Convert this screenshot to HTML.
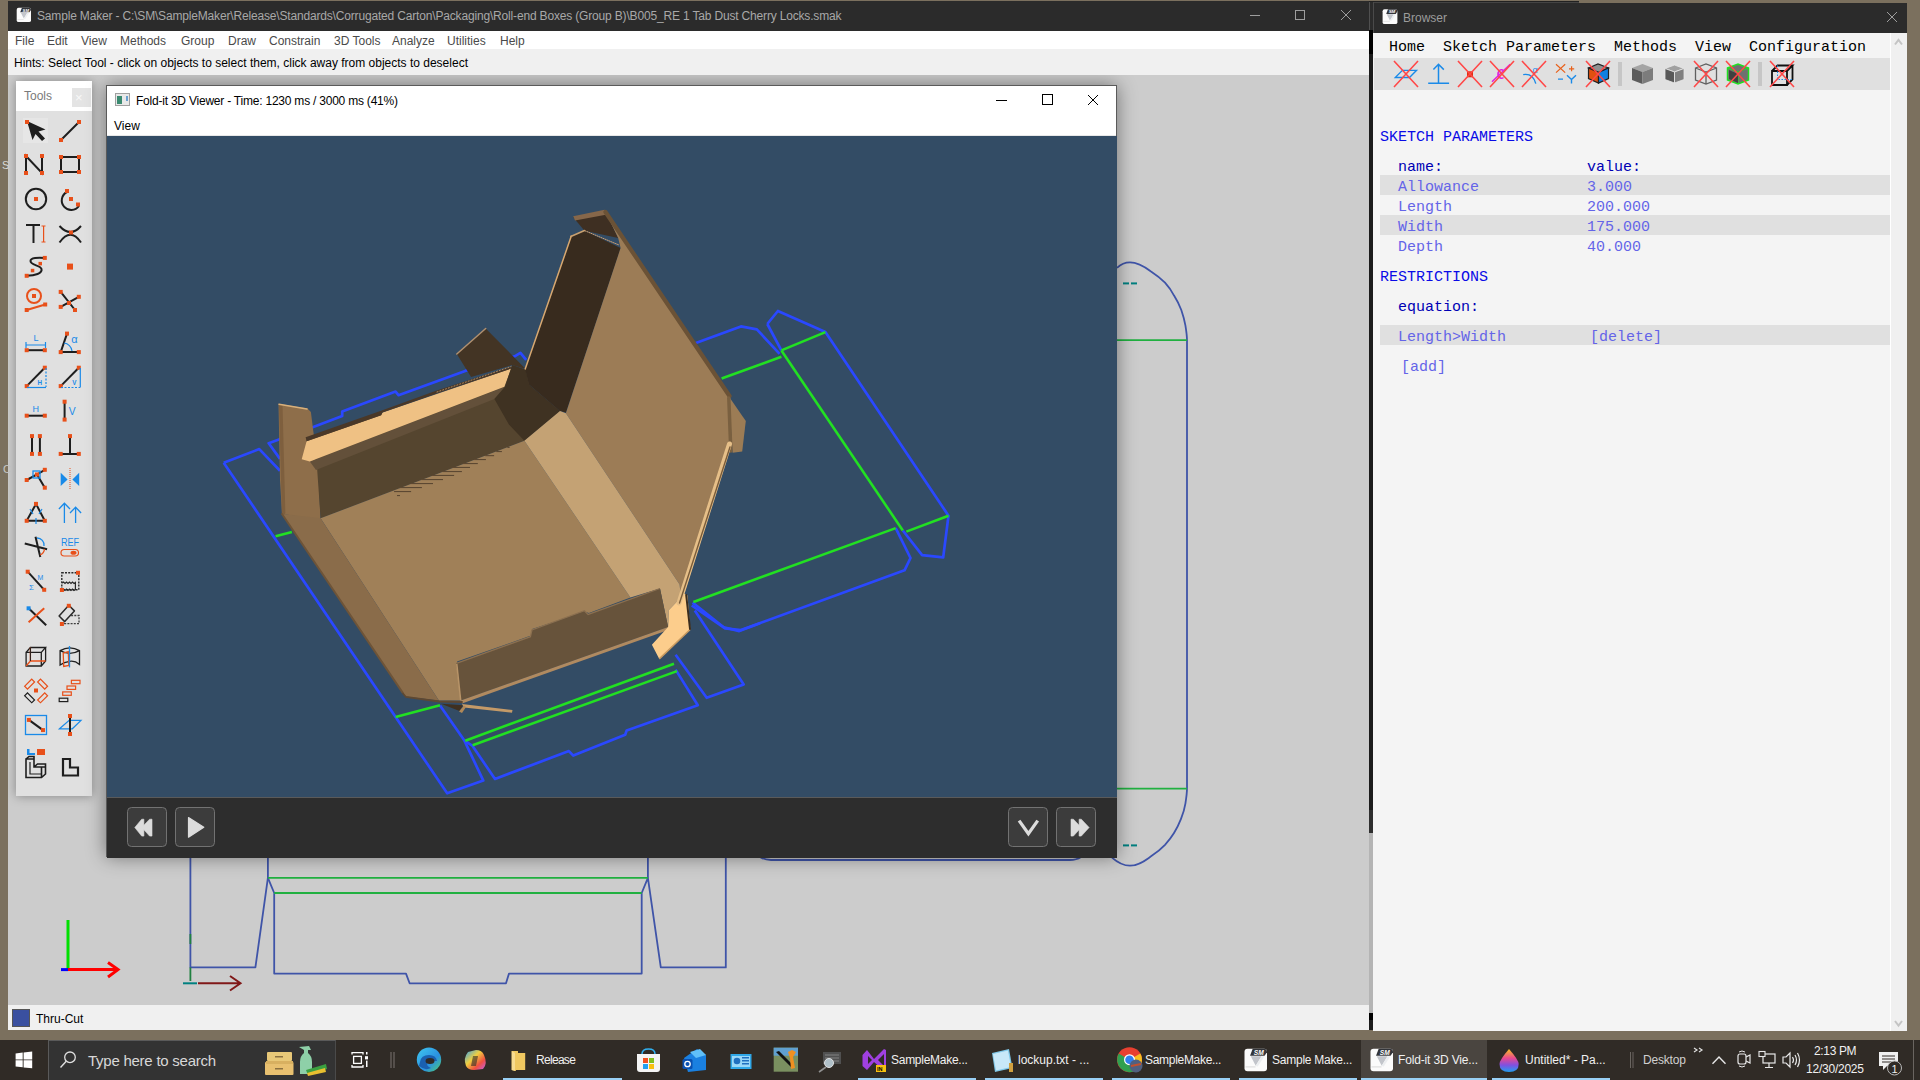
<!DOCTYPE html>
<html><head><meta charset="utf-8">
<style>
*{box-sizing:border-box;margin:0;padding:0}
html,body{width:1920px;height:1080px;overflow:hidden}
body{position:relative;background:#7b705e;font-family:"Liberation Sans",sans-serif;font-size:12px;color:#000}
.a{position:absolute}
.t{position:absolute;white-space:pre;line-height:1}
.mono{font-family:"Liberation Mono",monospace}
svg{position:absolute;left:0;top:0;overflow:visible}
</style></head><body>

<!-- ============ MAIN WINDOW ============ -->
<div class="a" id="main" style="left:8px;top:1px;width:1361px;height:1029px;background:#cccccc;overflow:hidden">
  <!-- title bar -->
  <div class="a" style="left:0;top:0;width:1361px;height:30px;background:#2b2b2b"></div>
  <!-- menu -->
  <div class="a" style="left:0;top:30px;width:1361px;height:18px;background:#fff"></div>
  <!-- hints -->
  <div class="a" style="left:0;top:48px;width:1361px;height:26px;background:#f0f0f0"></div>
  <!-- status -->
  <div class="a" style="left:0;top:1004px;width:1361px;height:25px;background:#f0f0f0"></div>
  <div class="a" style="left:4px;top:1008px;width:18px;height:18px;background:#3a50a0;border:1px solid #555"></div>
</div>
<!-- title text -->
<div class="t" style="left:37px;top:10px;color:#a8a8a8;font-size:12px;letter-spacing:-0.17px">Sample Maker - C:\SM\SampleMaker\Release\Standards\Corrugated Carton\Packaging\Roll-end Boxes (Group B)\B005_RE 1 Tab Dust Cherry Locks.smak</div>
<!-- menu text -->
<div class="t" style="left:15px;top:35px;color:#4a4a4a">File</div>
<div class="t" style="left:47px;top:35px;color:#4a4a4a">Edit</div>
<div class="t" style="left:81px;top:35px;color:#4a4a4a">View</div>
<div class="t" style="left:120px;top:35px;color:#4a4a4a">Methods</div>
<div class="t" style="left:181px;top:35px;color:#4a4a4a">Group</div>
<div class="t" style="left:228px;top:35px;color:#4a4a4a">Draw</div>
<div class="t" style="left:269px;top:35px;color:#4a4a4a">Constrain</div>
<div class="t" style="left:334px;top:35px;color:#4a4a4a">3D Tools</div>
<div class="t" style="left:392px;top:35px;color:#4a4a4a">Analyze</div>
<div class="t" style="left:447px;top:35px;color:#4a4a4a">Utilities</div>
<div class="t" style="left:500px;top:35px;color:#4a4a4a">Help</div>
<div class="t" style="left:14px;top:57px;color:#000">Hints: Select Tool - click on objects to select them, click away from objects to deselect</div>
<div class="t" style="left:36px;top:1013px;color:#000">Thru-Cut</div>

<svg width="1920" height="40" style="z-index:3"><g transform="translate(16.7 7.8) scale(0.6355555555555555)"><rect x="0" y="0" width="22.5" height="22.5" rx="3" fill="#fbfbfb"/><path d="M5.5 7 L8.2 0 L19 0 Q22.5 0 22.5 3 L22.5 3.5 L20 7 Z" fill="#33353a"/><text x="9.3" y="6.2" font-family="Liberation Sans" font-size="6.6" font-weight="bold" font-style="italic" fill="#fff">SM</text><path d="M6.3 7.4 L17 7.4 L11.2 17 Z" fill="#c2c5cb"/><path d="M17 7.4 L20 7.4 L13 18 L11.2 17 Z" fill="#eceef0"/><rect x="1" y="17.6" width="10" height="1" fill="#dadada"/></g><g transform="translate(1382.6 9.3) scale(0.6577777777777778)"><rect x="0" y="0" width="22.5" height="22.5" rx="3" fill="#fbfbfb"/><path d="M5.5 7 L8.2 0 L19 0 Q22.5 0 22.5 3 L22.5 3.5 L20 7 Z" fill="#33353a"/><text x="9.3" y="6.2" font-family="Liberation Sans" font-size="6.6" font-weight="bold" font-style="italic" fill="#fff">SM</text><path d="M6.3 7.4 L17 7.4 L11.2 17 Z" fill="#c2c5cb"/><path d="M17 7.4 L20 7.4 L13 18 L11.2 17 Z" fill="#eceef0"/><rect x="1" y="17.6" width="10" height="1" fill="#dadada"/></g></svg>
<!-- title buttons main -->
<svg width="1920" height="40" style="z-index:2">
  <g stroke="#9d9d9d" stroke-width="1" fill="none">
    <line x1="1250" y1="15.5" x2="1260" y2="15.5"/>
    <rect x="1295.5" y="10.5" width="9" height="9"/>
    <line x1="1341" y1="10" x2="1351" y2="20"/><line x1="1351" y1="10" x2="1341" y2="20"/>
  </g>
</svg>

<!-- strip between windows -->
<div class="a" style="left:1369px;top:1px;width:4px;height:30px;background:#2b2b2b;border-left:1px solid #505050"></div>
<div class="t" style="left:2px;top:160px;color:#d8d8d8;font-size:11px">S</div>
<div class="t" style="left:3px;top:464px;color:#c8c8c8;font-size:11px">C</div>
<div class="a" style="left:1369px;top:30px;width:4px;height:1000px;background:#1c1c1c"></div>
<div class="a" style="left:1369px;top:30px;width:4px;height:24px;background:#000"></div>
<div class="a" style="left:1369px;top:810px;width:4px;height:23px;background:#2e2e2e"></div>
<div class="a" style="left:1369px;top:833px;width:4px;height:180px;background:#b4b4b4"></div>
<div class="a" style="left:1369px;top:1013px;width:4px;height:7px;background:#000"></div>

<!-- ============ BROWSER ============ -->
<div class="a" style="left:1369px;top:1px;width:210px;height:1px;background:#222"></div><div class="a" style="left:1373px;top:2px;width:206px;height:1px;background:#444"></div><div class="a" style="left:1373px;top:2px;width:1px;height:31px;background:#4a4a4a;z-index:2"></div>
<div class="a" style="left:1373px;top:3px;width:534px;height:1028px;background:#f4f4f4">
  <div class="a" style="left:0;top:0;width:534px;height:30px;background:#2b2b2b"></div>
  <div class="a" style="left:1px;top:55px;width:516px;height:32px;background:#e0e0e0"></div>
  <div class="a" style="left:517px;top:30px;width:17px;height:998px;background:#f0f0f0;border-left:1px solid #fff"></div>
</div>
<div class="t" style="left:1403px;top:12px;color:#9c9c9c">Browser</div>
<svg width="1920" height="40"><g stroke="#9d9d9d" stroke-width="1" fill="none"><line x1="1887" y1="12" x2="1897" y2="22"/><line x1="1897" y1="12" x2="1887" y2="22"/></g></svg>

<div class="t mono" style="left:1389px;top:40px;font-size:15px;color:#000">Home  Sketch Parameters  Methods  View  Configuration</div>
<svg width="1920" height="1080" id="bicons" style="z-index:3"><path d="M1395.3 77.5 L1402.4 70.3 L1416.6 70.3 L1409.5 77.5 Z" stroke="#1a8ae8" stroke-width="1.3" fill="none" />
<path d="M1394 61 L1418 87 M1418 61 L1394 87" stroke="#ff4848" stroke-width="1.6" fill="none"/>
<path d="M1428.2 83.2 L1449.1 83.2 M1438.5 83 L1438.5 64.5 M1433.4 69.6 L1438.5 64.3 L1443.8 69.6" stroke="#1a8ae8" stroke-width="1.5" fill="none" />
<rect x="1467" y="71.3" width="6" height="6" fill="#e03010"/>
<path d="M1458 61 L1482 87 M1482 61 L1458 87" stroke="#ff4848" stroke-width="1.6" fill="none"/>
<path d="M1492 81.7 L1510.2 64.2" stroke="#e020e0" stroke-width="1.5" fill="none" />
<path d="M1503.5 70.5 A3.5 4.2 0 1 0 1503.5 77.5" stroke="#e020e0" stroke-width="1.5" fill="none" />
<path d="M1490 61 L1514 87 M1514 61 L1490 87" stroke="#ff4848" stroke-width="1.6" fill="none"/>
<path d="M1523.2 74.6 Q1533 73 1535.8 83.6" stroke="#1a8ae8" stroke-width="1.4" fill="none" />
<text x="1532.5" y="73" font-family="Liberation Sans" font-size="9" fill="#1a8ae8">α</text>
<path d="M1522 61 L1546 87 M1546 61 L1522 87" stroke="#ff4848" stroke-width="1.6" fill="none"/>
<path d="M1556 64.2 L1565.2 72.6 M1565.2 64.2 L1556 72.6 M1569 68.8 L1574.2 68.8 M1571.6 66.3 L1571.6 71.2" stroke="#e8601a" stroke-width="1.2" fill="none" />
<path d="M1558 79.1 L1563 79.1 M1567 75.2 L1571.5 79.5 L1576 75.2 M1571.5 79.5 L1571.5 83.6" stroke="#1a8ae8" stroke-width="1.4" fill="none" />
<path d="M1588.5 68 L1598 64 L1608.5 68 L1598.5 72.5 Z" stroke="#202020" stroke-width="1.2" fill="#909090" />
<path d="M1588.5 68 L1598.5 72.5 L1598.5 83 L1588.5 78.5 Z" stroke="#202020" stroke-width="1.2" fill="#e05010" />
<path d="M1598.5 72.5 L1608.5 68 L1608.5 78.5 L1598.5 83 Z" stroke="#202020" stroke-width="1.2" fill="#1080e0" />
<path d="M1586 61 L1610 87 M1610 61 L1586 87" stroke="#ff4848" stroke-width="1.6" fill="none"/>
<rect x="1618" y="62" width="4" height="24" fill="#c6c6c6"/><rect x="1758" y="62" width="4" height="24" fill="#c6c6c6"/>
<path d="M1632 68 L1642.5 64 L1653 68 L1642.5 72 Z" stroke="none" stroke-width="0" fill="#a4a4a4" />
<path d="M1632 68 L1642.5 72 L1642.5 84 L1632 80 Z" stroke="none" stroke-width="0" fill="#5c5c5c" />
<path d="M1642.5 72 L1653 68 L1653 80 L1642.5 84 Z" stroke="none" stroke-width="0" fill="#7c7c7c" />
<path d="M1665 68.5 L1674.5 65 L1684 68.5 L1674.5 72 Z" stroke="#e8e8e8" stroke-width="0.8" fill="#a0a0a0" />
<path d="M1665 68.5 L1674.5 72 L1674.5 83 L1665 79.5 Z" stroke="#e8e8e8" stroke-width="0.8" fill="#585858" />
<path d="M1674.5 72 L1684 68.5 L1684 79.5 L1674.5 83 Z" stroke="#e8e8e8" stroke-width="0.8" fill="#808080" />
<path d="M1695.5 68 L1706 64 L1716.5 68 L1716.5 80 L1706 84 L1695.5 80 Z M1695.5 68 L1706 72 L1716.5 68 M1706 72 L1706 84" stroke="#606060" stroke-width="1.3" fill="none" />
<path d="M1694 61 L1718 87 M1718 61 L1694 87" stroke="#ff4848" stroke-width="1.6" fill="none"/>
<path d="M1727.5 68 L1738 64 L1748.5 68 L1748.5 80 L1738 84 L1727.5 80 Z" stroke="#20e020" stroke-width="1.5" fill="#707070" />
<path d="M1727.5 68 L1738 72 L1748.5 68 M1738 72 L1738 84" stroke="#20e020" stroke-width="1" fill="none" />
<path d="M1729 70 L1738 74 L1738 83 L1729 79 Z" stroke="none" stroke-width="0" fill="#404040" />
<path d="M1726 61 L1750 87 M1750 61 L1726 87" stroke="#ff4848" stroke-width="1.6" fill="none"/>
<path d="M1772 71 L1787 71 L1787 85 L1772 85 Z M1772 71 L1777.5 65.5 L1792.5 65.5 L1787 71 M1792.5 65.5 L1792.5 79.5 L1787 85" stroke="#101010" stroke-width="1.8" fill="none" />
<path d="M1777.5 65.5 L1777.5 79.5 L1792.5 79.5 M1777.5 79.5 L1772 85" stroke="#1a8ae8" stroke-width="1" fill="none" stroke-dasharray="1.5 1.5"/>
<path d="M1770 61 L1794 87 M1794 61 L1770 87" stroke="#ff4848" stroke-width="1.6" fill="none"/></svg>
<div class="a" style="left:1380px;top:175px;width:510px;height:20px;background:#e0e0e0"></div>
<div class="a" style="left:1380px;top:215px;width:510px;height:20px;background:#e0e0e0"></div>
<div class="a" style="left:1380px;top:325px;width:510px;height:20px;background:#e0e0e0"></div>
<div class="t mono" style="left:1380px;top:130px;font-size:15px;color:#0a0ae6">SKETCH PARAMETERS</div>
<div class="t mono" style="left:1398px;top:160px;font-size:15px;color:#0000b4">name:</div>
<div class="t mono" style="left:1587px;top:160px;font-size:15px;color:#0000b4">value:</div>
<div class="t mono" style="left:1398px;top:180px;font-size:15px;color:#6464e8">Allowance</div>
<div class="t mono" style="left:1587px;top:180px;font-size:15px;color:#6464e8">3.000</div>
<div class="t mono" style="left:1398px;top:200px;font-size:15px;color:#6464e8">Length</div>
<div class="t mono" style="left:1587px;top:200px;font-size:15px;color:#6464e8">200.000</div>
<div class="t mono" style="left:1398px;top:220px;font-size:15px;color:#6464e8">Width</div>
<div class="t mono" style="left:1587px;top:220px;font-size:15px;color:#6464e8">175.000</div>
<div class="t mono" style="left:1398px;top:240px;font-size:15px;color:#6464e8">Depth</div>
<div class="t mono" style="left:1587px;top:240px;font-size:15px;color:#6464e8">40.000</div>
<div class="t mono" style="left:1380px;top:270px;font-size:15px;color:#0a0ae6">RESTRICTIONS</div>
<div class="t mono" style="left:1398px;top:300px;font-size:15px;color:#0000b4">equation:</div>
<div class="t mono" style="left:1398px;top:330px;font-size:15px;color:#6464e8">Length&gt;Width</div>
<div class="t mono" style="left:1590px;top:330px;font-size:15px;color:#6464e8">[delete]</div>
<div class="t mono" style="left:1401px;top:360px;font-size:15px;color:#6464e8">[add]</div>
<svg width="1920" height="1080" style="z-index:3"><path d="M1895 44.5 L1898.5 40 L1902 44.5 M1895 1021 L1898.5 1025.5 L1902 1021" stroke="#c4c4c4" stroke-width="2" fill="none"/></svg>


<!-- ============ CANVAS DRAWING (behind viewer) ============ -->
<svg width="1920" height="1080" style="z-index:0">
 <g fill="none" stroke="#3f54a8" stroke-width="1.8" stroke-linejoin="round">
  <path d="M1117 267.8 C1121 264 1126 262.4 1130 262.4 C1138 262.4 1145 267 1151 271.4 C1158 276 1162 279.5 1165 282.6 C1169 287 1172 291.5 1174.2 295.8 C1177.5 301 1179.5 305.5 1181.3 310 C1183 315 1184.5 320 1185.4 325.4 C1186.3 331 1187 336 1187 340 L1187 788.6 C1187 793 1186.3 798 1185.4 803.6 C1184.5 809 1183 814 1181 818.9 C1179 824 1176.5 829 1174 833 C1171 838 1168 841.5 1165 844.8 C1161 849 1156 853 1150.7 856.6 C1145 860.5 1139 865.7 1130 865.7 C1124 865.7 1117 862 1112 857.6"/>
  <path d="M760 857 C763.5 859.3 767 860 771 860 L1070 860 C1074 860 1077.5 859.3 1081 857"/>
  <path d="M190.4 857 L190.4 967.4 L255.4 967.4 L267.9 877.8 L267.9 857"/>
  <path d="M267.9 877.8 L274.2 893 L274.2 973.6 L406 973.6 L409.6 983.3 L506 983.3 L509 973.6 L641.7 973.6 L641.7 893 L647.9 877.8 L660.8 967.4 L725.8 967.4 L725.8 857"/>
  <path d="M647.9 857 L647.9 877.8"/>
 </g>
 <g fill="none" stroke="#20b040" stroke-width="1.8">
  <line x1="1117" y1="340.1" x2="1187" y2="340.1"/>
  <line x1="1117" y1="788.6" x2="1187" y2="788.6"/>
  <line x1="267.9" y1="877.8" x2="647.9" y2="877.8"/>
  <line x1="274.2" y1="893" x2="641.7" y2="893"/>
  <line x1="190.4" y1="934" x2="190.4" y2="944" stroke="#208040"/>
  <line x1="190.4" y1="967.4" x2="190.4" y2="981" stroke="#208040"/>
 </g>
 <g stroke="#008080" stroke-width="2"><line x1="1123" y1="283.4" x2="1129" y2="283.4"/><line x1="1131" y1="283.4" x2="1137" y2="283.4"/>
 <line x1="1123" y1="845.4" x2="1129" y2="845.4"/><line x1="1131" y1="845.4" x2="1137" y2="845.4"/>
 <line x1="183" y1="983.3" x2="197" y2="983.3"/></g>
 <g stroke="#801818" stroke-width="2" fill="none"><path d="M198 983.3 L240.5 983.3 M230 976 L240.5 983.3 L230 990.5"/></g>
 <g stroke-width="3" fill="none">
  <line x1="68" y1="920" x2="68" y2="969.6" stroke="#00e000"/>
  <path d="M68 969.6 L118 969.6 M108 962.6 L118 969.6 L108 977" stroke="#ff0000"/>
  <line x1="61" y1="969.6" x2="68" y2="969.6" stroke="#0000ff"/>
 </g>
</svg>

<!-- ============ TOOLS PANEL ============ -->
<div class="a" style="left:8px;top:75px;width:1361px;height:930px;overflow:hidden;z-index:1"><div class="a" style="left:8px;top:6px;width:76px;height:715px;box-shadow:0 0 10px rgba(0,0,0,0.35)"></div></div>
<div class="a" style="left:16px;top:81px;width:76px;height:715px;background:#e0e0e0;z-index:2">
  <div class="a" style="left:0;top:0;width:76px;height:30px;background:#fff"></div>
  <div class="a" style="left:56px;top:7px;width:19px;height:19px;background:#e4e4e4"></div>
  <div class="t" style="left:59px;top:10px;color:#f8f8f8;font-size:13px">×</div>
</div>
<div class="t" style="left:24px;top:90px;color:#7a7a7a;z-index:3">Tools</div>
<svg width="1920" height="1080" id="tools" style="z-index:3"><rect x="23" y="118" width="25" height="25" fill="#e6e6e6"/>
<path d="M27 121 L45.5 129.5 L38.5 131.5 L45 138.5 L42 141 L35.5 134 L32.5 140 Z" stroke="#1e1e1e" stroke-width="0" fill="#1e1e1e" />
<rect x="25.0" y="120.0" width="4" height="4" fill="#e8501a"/>
<line x1="61" y1="140" x2="79" y2="122" stroke="#1e1e1e" stroke-width="2" />
<rect x="77.0" y="120.0" width="4" height="4" fill="#e8501a"/>
<rect x="59.0" y="138.0" width="4" height="4" fill="#e8501a"/>
<path d="M26 173 L26 156 L42 173 L42 156" stroke="#1e1e1e" stroke-width="2" fill="none" />
<rect x="24.0" y="154.0" width="4" height="4" fill="#e8501a"/>
<rect x="40.0" y="154.0" width="4" height="4" fill="#e8501a"/>
<rect x="24.0" y="171.0" width="4" height="4" fill="#e8501a"/>
<rect x="40.0" y="171.0" width="4" height="4" fill="#e8501a"/>
<rect x="61" y="157" width="18" height="15" stroke="#1e1e1e" stroke-width="2" fill="none"/>
<rect x="59.0" y="155.0" width="4" height="4" fill="#e8501a"/>
<rect x="77.0" y="155.0" width="4" height="4" fill="#e8501a"/>
<rect x="59.0" y="170.0" width="4" height="4" fill="#e8501a"/>
<rect x="77.0" y="170.0" width="4" height="4" fill="#e8501a"/>
<circle cx="36" cy="199" r="10.2" stroke="#1e1e1e" stroke-width="2" fill="none"/>
<rect x="34.0" y="197.0" width="4" height="4" fill="#e8501a"/>
<path d="M67 192 A9.5 9.5 0 1 0 79 206" stroke="#1e1e1e" stroke-width="2" fill="none" />
<rect x="65.0" y="189.0" width="4" height="4" fill="#e8501a"/>
<rect x="69.0" y="197.0" width="4" height="4" fill="#e8501a"/>
<rect x="76.0" y="202.5" width="4" height="4" fill="#e8501a"/>
<path d="M26 225 L40 225 M33.5 225 L33.5 243" stroke="#1e1e1e" stroke-width="2" fill="none" />
<path d="M43.6 226.5 L43.6 241.5 M41.5 226 L45.5 226 M41.5 242 L45.5 242" stroke="#e8501a" stroke-width="1.2" fill="none" />
<path d="M59.5 226 Q70.5 238 81 226 M59.5 242.5 Q70.5 227 81 242.5" stroke="#1e1e1e" stroke-width="2" fill="none" />
<rect x="69.0" y="230.5" width="4" height="4" fill="#e8501a"/>
<path d="M26.7 275.8 C35 275.5 42.5 273.5 41.5 269 C40.5 265 30.5 265.5 30.5 261 C30.5 257.5 38 257.5 44.8 257.9" stroke="#1e1e1e" stroke-width="2" fill="none" />
<rect x="42.8" y="255.9" width="4" height="4" fill="#e8501a"/>
<rect x="38.5" y="261.9" width="3.5" height="3.5" fill="#e8501a"/>
<rect x="30.8" y="268.8" width="3.5" height="3.5" fill="#e8501a"/>
<rect x="24.7" y="273.8" width="4" height="4" fill="#e8501a"/>
<rect x="67.0" y="263.6" width="6" height="6" fill="#e8501a"/>
<circle cx="34" cy="296" r="7" stroke="#e8501a" stroke-width="2" fill="none"/>
<rect x="32.0" y="294.0" width="4" height="4" fill="#e8501a"/>
<line x1="26.7" y1="310" x2="45.2" y2="304.5" stroke="#e8501a" stroke-width="2" />
<rect x="24.7" y="308.0" width="4" height="4" fill="#e8501a"/>
<rect x="43.2" y="302.5" width="4" height="4" fill="#e8501a"/>
<path d="M60.7 291.9 L75 310 M78.8 296.8 L60.7 306.9" stroke="#1e1e1e" stroke-width="2" fill="none" />
<rect x="58.7" y="289.9" width="4" height="4" fill="#e8501a"/>
<rect x="76.8" y="294.8" width="4" height="4" fill="#e8501a"/>
<rect x="58.7" y="304.9" width="4" height="4" fill="#e8501a"/>
<rect x="73.0" y="308.0" width="4" height="4" fill="#e8501a"/>
<rect x="67.0" y="301.0" width="4" height="4" fill="#e8501a"/>
<line x1="26.7" y1="350.2" x2="44.8" y2="350.2" stroke="#1e1e1e" stroke-width="2" />
<rect x="24.7" y="348.2" width="4" height="4" fill="#e8501a"/>
<rect x="42.8" y="348.2" width="4" height="4" fill="#e8501a"/>
<path d="M26 345 L45.5 345 M26 342 L26 348 M45.5 342 L45.5 348" stroke="#1a8ae8" stroke-width="1.2" fill="none" />
<text x="33.6" y="340.8" fill="#1a8ae8" font-family="Liberation Sans" font-size="9" >L</text>
<path d="M60.7 352.1 L67 333.6 M60.7 352.1 L78.8 352.1" stroke="#1e1e1e" stroke-width="2" fill="none" />
<rect x="65.0" y="331.6" width="4" height="4" fill="#e8501a"/>
<rect x="58.7" y="350.1" width="4" height="4" fill="#e8501a"/>
<rect x="76.8" y="350.1" width="4" height="4" fill="#e8501a"/>
<path d="M64 343 A9 9 0 0 1 72 351" stroke="#1a8ae8" stroke-width="1.2" fill="none" />
<text x="71.3" y="343.2" fill="#1a8ae8" font-family="Liberation Sans" font-size="11" >α</text>
<line x1="26.7" y1="386.1" x2="44.8" y2="367.7" stroke="#1e1e1e" stroke-width="2" />
<rect x="24.7" y="384.1" width="4" height="4" fill="#e8501a"/>
<rect x="42.8" y="365.7" width="4" height="4" fill="#e8501a"/>
<path d="M27 387.5 L46 387.5" stroke="#1a8ae8" stroke-width="1.2" fill="none" />
<path d="M46 368 L46 387" stroke="#1a8ae8" stroke-width="1.2" fill="none" stroke-dasharray="2 1.5"/>
<text x="37.6" y="385.3" fill="#1a8ae8" font-family="Liberation Sans" font-size="6.3" font-weight="bold">H</text>
<line x1="60.7" y1="386.1" x2="78.8" y2="367.7" stroke="#1e1e1e" stroke-width="2" />
<rect x="58.7" y="384.1" width="4" height="4" fill="#e8501a"/>
<rect x="76.8" y="365.7" width="4" height="4" fill="#e8501a"/>
<path d="M80.3 368 L80.3 387.5" stroke="#1a8ae8" stroke-width="1.2" fill="none" />
<path d="M61 387.5 L80 387.5" stroke="#1a8ae8" stroke-width="1.2" fill="none" stroke-dasharray="2 1.5"/>
<text x="72.2" y="385.3" fill="#1a8ae8" font-family="Liberation Sans" font-size="6.3" font-weight="bold">V</text>
<line x1="26.7" y1="415.7" x2="44.8" y2="415.7" stroke="#1e1e1e" stroke-width="2" />
<rect x="24.7" y="413.7" width="4" height="4" fill="#e8501a"/>
<rect x="42.8" y="413.7" width="4" height="4" fill="#e8501a"/>
<text x="32.5" y="412.3" fill="#1a8ae8" font-family="Liberation Sans" font-size="9" >H</text>
<line x1="64.6" y1="401.7" x2="64.6" y2="419.6" stroke="#1e1e1e" stroke-width="2" />
<rect x="62.6" y="399.7" width="4" height="4" fill="#e8501a"/>
<rect x="62.6" y="417.6" width="4" height="4" fill="#e8501a"/>
<text x="68.8" y="415.3" fill="#1a8ae8" font-family="Liberation Sans" font-size="10.3" >V</text>
<line x1="32" y1="436.1" x2="32" y2="453.9" stroke="#1e1e1e" stroke-width="2" />
<line x1="39.9" y1="436.1" x2="39.9" y2="453.9" stroke="#1e1e1e" stroke-width="2" />
<rect x="30.0" y="434.1" width="4" height="4" fill="#e8501a"/>
<rect x="30.0" y="451.9" width="4" height="4" fill="#e8501a"/>
<rect x="37.9" y="434.1" width="4" height="4" fill="#e8501a"/>
<rect x="37.9" y="451.9" width="4" height="4" fill="#e8501a"/>
<path d="M70 436.1 L70 453.9 M60.7 453.9 L78.8 453.9" stroke="#1e1e1e" stroke-width="2" fill="none" />
<rect x="68.0" y="434.1" width="4" height="4" fill="#e8501a"/>
<rect x="58.7" y="451.9" width="4" height="4" fill="#e8501a"/>
<rect x="76.8" y="451.9" width="4" height="4" fill="#e8501a"/>
<path d="M26.7 480 L37 474.5 L44.8 469.8 M37 474.5 L44.8 487.7" stroke="#1e1e1e" stroke-width="2" fill="none" />
<rect x="24.7" y="478.0" width="4" height="4" fill="#e8501a"/>
<rect x="42.8" y="467.8" width="4" height="4" fill="#e8501a"/>
<rect x="42.8" y="485.7" width="4" height="4" fill="#e8501a"/>
<rect x="35.0" y="472.5" width="4" height="4" fill="#e8501a"/>
<rect x="33" y="471" width="7" height="7" stroke="#1a8ae8" stroke-width="1.3" fill="none"/>
<path d="M60.7 472.8 L60.7 486.1 L67.6 479.5 Z" stroke="#1a8ae8" stroke-width="0" fill="#1a8ae8" />
<path d="M79.2 472.8 L79.2 486.1 L72.4 479.5 Z" stroke="#1a8ae8" stroke-width="0" fill="#1a8ae8" />
<path d="M70 468 L70 489.5" stroke="#e8501a" stroke-width="1" fill="none" stroke-dasharray="1 1"/>
<path d="M36 503.9 L26.7 520.8 L44.8 520.8 Z" stroke="#1e1e1e" stroke-width="2" fill="none" />
<rect x="34.0" y="501.9" width="4" height="4" fill="#e8501a"/>
<rect x="24.7" y="518.8" width="4" height="4" fill="#e8501a"/>
<rect x="42.8" y="518.8" width="4" height="4" fill="#e8501a"/>
<path d="M30 509 L33 514 M42 509 L39 514 M36 518 L36 524" stroke="#1a8ae8" stroke-width="1.2" fill="none" />
<path d="M64.4 523 L64.4 503.5 M58.9 509 L64.4 503.3 L70 509 M75.6 523 L75.6 507.5 M70 513 L75.6 507.2 L81.1 513" stroke="#1a8ae8" stroke-width="1.3" fill="none" />
<path d="M24.75 543.5 L47.1 549.3 M35.5 536.7 L40.3 557.1" stroke="#1e1e1e" stroke-width="2" fill="none" />
<path d="M37 538 A7 7 0 0 1 44 546" stroke="#1a8ae8" stroke-width="1.3" fill="none" />
<path d="M44.5 549 A7 7 0 0 1 40 555" stroke="#e8501a" stroke-width="1.3" fill="none" />
<text x="60.9" y="545.6" fill="#1a8ae8" font-family="Liberation Sans" font-size="11" textLength="18.2" lengthAdjust="spacingAndGlyphs">REF</text>
<rect x="61" y="549.5" width="17.5" height="6.5" rx="3.2" stroke="#e8501a" stroke-width="1.2" fill="none"/>
<ellipse cx="73.5" cy="552.7" rx="3" ry="2" fill="#e8501a"/>
<line x1="27.7" y1="571.7" x2="44.2" y2="589.8" stroke="#1e1e1e" stroke-width="2" />
<rect x="25.7" y="569.7" width="4" height="4" fill="#e8501a"/>
<rect x="42.2" y="587.8" width="4" height="4" fill="#e8501a"/>
<text x="37.5" y="579.5" fill="#1a8ae8" font-family="Liberation Sans" font-size="7" >M</text>
<text x="29" y="589.5" fill="#1a8ae8" font-family="Liberation Sans" font-size="8" >Σ</text>
<rect x="61.8" y="572.8" width="17" height="17" stroke="#2a2a2a" stroke-width="1.4" fill="none" stroke-dasharray="2 1.2"/>
<path d="M62 583 L63.5 582 L65 583.5 L66.5 582 L68 583.5 L69.5 582 L71 583.5 L72.5 582 L74 583.5 L75.4 582.5 L75.4 590 M62 590 L63.5 589 L65 590.5 L66.5 589 L68 590.5 L69.5 589 L71 590.5 L72.5 589 L74 590.5 L75.4 589.5" stroke="#2a2a2a" stroke-width="1.2" fill="none" />
<rect x="76.0" y="570.8" width="4" height="4" fill="#e8501a"/>
<rect x="59.9" y="588.0" width="4" height="4" fill="#e8501a"/>
<line x1="28.6" y1="608.3" x2="46.2" y2="625.2" stroke="#1e1e1e" stroke-width="2" />
<line x1="28.6" y1="622.3" x2="44.2" y2="608.3" stroke="#e8501a" stroke-width="2" />
<rect x="26.6" y="606.3" width="4" height="4" fill="#1a8ae8"/>
<rect x="64.7" y="615.5" width="14.3" height="8.1" stroke="#404040" stroke-width="1.3" fill="none" stroke-dasharray="2 1.2"/>
<path d="M59.1 616 L68.8 605.3 L74.4 610.9 L64.7 621.6 Z" stroke="#2a2a2a" stroke-width="1.5" fill="#e0e0e0" stroke-linejoin="round"/>
<rect x="66.8" y="603.8" width="4" height="4" fill="#e8501a"/>
<rect x="59.9" y="622.0" width="4" height="4" fill="#e8501a"/>
<path d="M26.1 652.4 L41.3 652.4 L41.3 666 L26.1 666 Z M26.1 652.4 L30.4 647.5 L45.6 647.5 L41.3 652.4 M45.6 647.5 L45.6 661 L41.3 666" stroke="#1e1e1e" stroke-width="1.3" fill="none" />
<path d="M26.1 666 L30.4 661 L45.6 661 M30.4 661 L30.4 647.5" stroke="#e8501a" stroke-width="1.3" fill="none" />
<path d="M30.4 661 L30.4 647.5" stroke="#1e1e1e" stroke-width="1.0" fill="none" />
<path d="M60.1 664.9 L60.1 650.6 Q69.8 645 79.5 650.6 L79.5 664.4 Q75 660.5 69.8 661.3 Q64 662 60.1 664.9 Z M60.1 650.6 Q69.8 656 79.5 650.6" stroke="#1e1e1e" stroke-width="1.3" fill="none" />
<path d="M63.2 653.2 L68.3 651.6 L68.8 665.4 L63.7 666.4 Z" stroke="#e8501a" stroke-width="1.3" fill="none" />
<path d="M69.5 646 L69.5 667.4" stroke="#1a8ae8" stroke-width="1.3" fill="none" />
<rect x="24.6" y="682.1" width="10" height="4" stroke="#e8501a" stroke-width="1.2" fill="none" transform="rotate(-45 29.6 684.1)"/>
<rect x="37.6" y="682.1" width="10" height="4" stroke="#e8501a" stroke-width="1.2" fill="none" transform="rotate(45 42.6 684.1)"/>
<rect x="37.6" y="695.8" width="10" height="4" stroke="#e8501a" stroke-width="1.2" fill="none" transform="rotate(-45 42.6 697.8)"/>
<rect x="24.6" y="695.8" width="10" height="4" stroke="#1e1e1e" stroke-width="1.2" fill="none" transform="rotate(45 29.6 697.8)"/>
<rect x="34.0" y="688.5" width="4" height="4" fill="#e8501a"/>
<rect x="71.4" y="680.3" width="8.6" height="3.4" stroke="#e8501a" stroke-width="1.2" fill="none"/>
<rect x="67" y="686" width="8.6" height="3.4" stroke="#e8501a" stroke-width="1.2" fill="none"/>
<rect x="62.7" y="691.9" width="8.6" height="3.4" stroke="#e8501a" stroke-width="1.2" fill="none"/>
<rect x="59.2" y="698.2" width="8.6" height="3.4" stroke="#1e1e1e" stroke-width="1.2" fill="none"/>
<rect x="25.5" y="715.5" width="21" height="19" stroke="#1a8ae8" stroke-width="1.3" fill="none"/>
<line x1="28.9" y1="719.9" x2="43" y2="730.1" stroke="#1e1e1e" stroke-width="2" />
<rect x="26.9" y="717.9" width="4" height="4" fill="#e8501a"/>
<rect x="41.0" y="728.1" width="4" height="4" fill="#e8501a"/>
<path d="M59.5 728.8 L69.2 720.4 L81 720.4 L72.3 728.8 Z" stroke="#1a8ae8" stroke-width="1.2" fill="none" />
<line x1="70" y1="716" x2="70" y2="734" stroke="#1e1e1e" stroke-width="2" />
<rect x="68.0" y="714.0" width="4" height="4" fill="#e8501a"/>
<rect x="68.0" y="732.0" width="4" height="4" fill="#e8501a"/>
<rect x="27" y="749" width="2.5" height="6" fill="#1a8ae8"/><rect x="27" y="753" width="8" height="2" fill="#1a8ae8"/>
<rect x="37" y="749" width="8" height="6" fill="#e8501a"/>
<path d="M26 759 L26 777.5 L41.5 777.5 L45.5 774 L45.5 767 L41.5 767 L34 767 L34 759 Z M26 759 L29 756.5 L34 756.5 L34 759 M34 767 L37.5 764 L45.5 764 L45.5 767 M41.5 767 L41.5 777.5" stroke="#1e1e1e" stroke-width="1.6" fill="none" />
<path d="M30 762 L30 774 L41.5 774" stroke="#1e1e1e" stroke-width="1.2" fill="none" />
<path d="M63 759 L63 775.5 L78 775.5 L78 767.5 L70 767.5 L70 759 Z" stroke="#1e1e1e" stroke-width="2.2" fill="none" /></svg>

<!-- ============ VIEWER ============ -->
<div class="a" style="left:8px;top:75px;width:1361px;height:930px;overflow:hidden;z-index:4"><div class="a" style="left:98px;top:10px;width:1011px;height:772px;box-shadow:0 0 18px rgba(0,0,0,0.45)"></div></div>
<div class="a" style="left:106px;top:85px;width:1011px;height:772px;background:#fff;border:1px solid #5a5a5a;border-bottom:none;z-index:5">
  <div class="a" style="left:0;top:49px;width:1009px;height:1px;background:#e8e8e8"></div>
  <div class="a" style="left:0;top:50px;width:1010px;height:661px;background:#334c65;overflow:hidden">
   <svg width="1010" height="661" viewBox="107 136 1010 661" id="scene"><g fill="none" stroke="#2a48ff" stroke-width="2.7" stroke-linejoin="round">
 <path d="M223.7 462.7 L259.3 449.1 L280 470.7 M223.7 462.7 L447.2 793.3 L483.3 780.6 L464.4 740.6 L440 705.6"/>
 <path d="M280 458.9 L268.7 443.2 L312.6 427.2 L342.2 416 L342.2 411.5 L395.6 391.6 L398.5 395.2 L465.2 370.9 L514.6 356.3 L520.4 352.8 L526.2 359.8"/>
 <path d="M464.4 740.6 L472.2 745.6 L495 778.9 L568.9 751.1 L573.3 755.6 L625.2 734.8 L626.7 730.4 L697.8 705.2 L675.6 669.6"/>
 <path d="M694.8 610.4 L743.7 684.4 L706.7 697.8 L675.6 654.8"/>
 <path d="M692.6 602.6 L723.7 627.2 L739.3 631.1 L760 623.3"/>
 <path d="M895.7 528.1 L910.5 558 L904.5 570.3 L740.9 630.1 L725.1 628.3 L691.7 605.5"/>
 <path d="M695.2 343.3 L740.9 326.4 L756.8 329.3 L779.6 353.9"/>
 <path d="M767.3 324 L777.9 311 L825.4 332.1 L948.5 515.7 L943.2 557.3 L922.1 555.2 L902.8 530.5"/>
 <path d="M767.3 324 L781.4 350.4"/>
</g>
<g fill="none" stroke="#22e022" stroke-width="2.6">
 <path d="M721.6 378.5 L781.4 356.7 M781.4 350.4 L825.4 332.1 M781.4 350.4 L902.8 530.5 M906.3 531.6 L948.5 515.7 M693.4 602 L895.7 528.1 M465.2 740.7 L674 663.7 M472.6 745.2 L677 671.1 M395.6 717 L440 705.2 M275.6 536.3 L291.9 531.9"/>
</g>
<g stroke="none">
 <path fill="#8e6e4a" d="M278.5 403.75 L307.5 408.4 L310.9 411.9 L313.2 430.4 L317.9 462.8 L320.6 520.6 L282 513.7 L280 480 Z"/>
 <path fill="#55452f" d="M306.3 440.8 L511.2 368 L525.6 369.4 L530 386.7 L540 394.4 L560 411.1 L524.4 440.7 L320.6 518.3 L316.7 462.8 Z"/>
 <path fill="#63503a" d="M309.8 461.6 L505 386.7 L494.4 398.9 L316 470 Z"/>
 <path fill="#efc184" d="M301.7 459.3 L306.6 441.3 L381.1 415.2 L382.5 412.6 L511.2 368.5 L504.4 386.7 L309.8 461.6 Z"/>
 <path fill="#433424" d="M456.8 354 L485.7 328.5 L525.6 368.9 L512.2 365 L471.1 377 Z"/>
 <path fill="#3f3222" d="M494.4 398.9 L505 386.7 L511.1 368.3 L512.2 365 L525.6 369.4 L528.9 384.4 L560 411.1 L524.4 440.7 L508.9 424.4 Z"/>
 <path fill="#382b1e" d="M571.3 236.1 L584.5 230.8 L620.6 248.1 L565.9 412.6 L560 411.1 L528.9 384.4 L525.2 368.9 L549.6 300 Z"/>
 <path fill="#3e2f22" d="M573.2 217.3 L605 210.8 L618.2 238 L584.5 230.8 Z"/>
 <path fill="#9c7c56" d="M605 210.8 L730.2 396.2 L731.5 441.9 L681.5 603 L679.6 584.5 L565.9 413.3 L620.6 248.1 L618.2 238 Z"/>
 <path fill="#9c7c55" d="M728.9 396.5 L745.8 421.1 L742.2 451.6 L732.6 452.8 Z"/>
 <path fill="#a08058" d="M320.6 518.3 L524.4 440.7 L630.4 597.4 L588.9 613 L585 611.7 L532.2 629 L531 635.6 L457 661.5 L461 700.4 L438.9 700.4 Z"/>
 <path fill="#c4a274" d="M524.4 440.7 L560 411.1 L565.9 413.3 L679.6 584.5 L681.5 603 L684.4 593.7 L668.9 610 L668.1 627 L660 588.5 L630.4 597.4 Z"/>
 <path fill="#8a6c4a" d="M282 513.7 L320.6 518.3 L438.9 700.4 L405.2 696.5 L402.6 692.6 Z"/>
 <path fill="#67533b" d="M456.3 663.3 L530.4 636.7 L531.9 630 L584.4 610.7 L588.1 614.4 L660 588.5 L668.1 627 L460.7 700.4 Z"/>
 <path fill="#b08a60" d="M460.7 700.4 L668.1 627 L668.4 630 L462 703.4 Z"/>
 <path d="M456.3 663.3 L530.4 636.7 L531.9 630 L584.4 610.7 L588.1 614.4 L660 588.5" stroke="#8c7050" stroke-width="1.3" fill="none"/>
 <path d="M456.8 664 L460.7 700.4" stroke="#b89468" stroke-width="1.5" fill="none"/>
 <path fill="#fccd8c" d="M651.9 644.8 L668.1 627 L668.9 610 L684.4 593.7 L687.4 595.2 L690.4 629.3 L659.3 658.9 Z"/>
 <path d="M690.4 629.3 L659.3 658.9" stroke="#c89a60" stroke-width="1.5" fill="none"/>
 <path fill="#3f3020" d="M441 703.8 L463 705.2 L459.5 711 Z"/>
 <path fill="#c49a68" d="M462 704 L512.5 710 L512 712.8 L464 707.5 Z"/><path fill="#b08858" d="M459 711.5 L464 705.5 L466 707 L462 713 Z"/>
</g>
<g fill="#5c4832"><rect x="507.4" y="446.9" width="2.2" height="1.1"/><rect x="496.3" y="451.0" width="5.6" height="1.1"/><rect x="485.2" y="455.1" width="8.9" height="1.1"/><rect x="474.1" y="459.0" width="11.8" height="1.1"/><rect x="463.0" y="463.0" width="14.8" height="1.1"/><rect x="452.2" y="466.9" width="17.8" height="1.1"/><rect x="442.6" y="471.0" width="19.3" height="1.1"/><rect x="431.9" y="474.9" width="22.2" height="1.1"/><rect x="421.5" y="479.0" width="21.5" height="1.1"/><rect x="410.7" y="483.0" width="22.3" height="1.1"/><rect x="399.6" y="487.0" width="22.3" height="1.1"/><rect x="394.1" y="491.0" width="17.0" height="1.1"/><rect x="397.0" y="495.0" width="3.0" height="1.1"/></g>
<g fill="none" stroke-linecap="round">
 <path d="M280.8 406 L283.6 513" stroke="#7e5f3e" stroke-width="3.5"/>
 <path d="M279 404.2 L307 409" stroke="#d8b07c" stroke-width="1.5"/>
 <path d="M282 514 L402.6 692.6" stroke="#6e5438" stroke-width="2"/>
 <path d="M403 693.5 L406 697 L439 701.5 L462 702" stroke="#5e4832" stroke-width="1.8"/>
 <path d="M306.6 441.3 L305.6 437.3 L381.1 410.8 L436.7 390.6 L512 366.2 L511.2 368.5 L436.7 393.6 L382.5 412.6 L381.1 415.2 Z" fill="#4a3828" stroke="none"/>
 <path d="M437 392 L511 366.5" stroke="#c8a070" stroke-width="0.8" stroke-dasharray="1 2" fill="none"/>
 <path d="M456.8 354 L485.7 328.5" stroke="#b09070" stroke-width="1.5"/>
 <path d="M571.3 236.1 L525.2 368.9" stroke="#d8a870" stroke-width="1.5"/>
 <path d="M570.8 236.5 L584.5 230.5" stroke="#c8a070" stroke-width="1.6"/>
 <path d="M585 230.8 L619 245" stroke="#d0a070" stroke-width="1" stroke-dasharray="1 1.2"/>
 <path d="M573.2 216.2 L604.6 209.8 L605.8 214.8 L575 220.5 Z" fill="#86674a" stroke="none"/>
 <path d="M605.5 212 L729.5 396" stroke="#6b5236" stroke-width="4.2"/>
 <path d="M728.8 398 L730.8 451" stroke="#7a6040" stroke-width="3.5"/>
 <path d="M729.5 444 L679 603" stroke="#e6bf88" stroke-width="5"/>
 <path d="M730 447 L679.5 603" stroke="#7a5c3a" stroke-width="1.4"/>
 <path d="M686.2 595 L690 629" stroke="#3a2c1e" stroke-width="2"/>
</g>
</svg>
  </div>
  <div class="a" style="left:0;top:711px;width:1010px;height:1px;background:#5a5a5a"></div>
  <div class="a" style="left:0;top:712px;width:1010px;height:60px;background:#2d2d2d"></div>
</div>
<div class="t" style="left:136px;top:95px;color:#000;z-index:6;letter-spacing:-0.22px">Fold-it 3D Viewer - Time: 1230 ms / 3000 ms (41%)</div>
<div class="t" style="left:114px;top:120px;color:#000;z-index:6">View</div>
<svg width="1920" height="1080" style="z-index:6">
  <g stroke="#000" stroke-width="1" fill="none">
    <line x1="996" y1="100.5" x2="1007" y2="100.5"/>
    <rect x="1042.5" y="94.5" width="10" height="10"/>
    <line x1="1088" y1="95" x2="1098" y2="105"/><line x1="1098" y1="95" x2="1088" y2="105"/>
  </g>
  <!-- viewer icon -->
  <rect x="115.5" y="93.5" width="14" height="12" fill="#e8e8e8" stroke="#a0a0a0"/>
  <rect x="117" y="96" width="5" height="8" fill="#3a8a70"/>
  <rect x="126" y="96" width="2" height="5" fill="#6aa0d0"/>
  <!-- buttons -->
  <g fill="#3c3c3c" stroke="#727272" stroke-width="1">
    <rect x="127.5" y="807.5" width="39" height="39" rx="4"/>
    <rect x="175.5" y="807.5" width="39" height="39" rx="4"/>
    <rect x="1008.5" y="807.5" width="39" height="39" rx="4"/>
    <rect x="1056.5" y="807.5" width="39" height="39" rx="4"/>
  </g>
  <g fill="#dcdcdc">
    <path d="M152 819.2 L149.6 819.2 L143.9 825.2 L143.9 819.2 L141.7 819.2 L134.8 827.5 L141.7 836.1 L143.9 836.1 L143.9 829.8 L149.6 836.1 L152 836.1 Z" stroke="#dcdcdc" stroke-width="0.6" stroke-linejoin="round"/>
    <path d="M188.5 817.5 L203.8 827.3 L188.5 837.2 Z" stroke="#dcdcdc" stroke-width="1.2" stroke-linejoin="round"/>
    <path d="M1071 819.2 L1073.4 819.2 L1079.1 825.2 L1079.1 819.2 L1081.3 819.2 L1089.1 827.5 L1081.3 836.1 L1079.1 836.1 L1079.1 829.8 L1073.4 836.1 L1071 836.1 Z" stroke="#dcdcdc" stroke-width="0.6" stroke-linejoin="round"/>
  </g>
  <path d="M1020 822 L1028.4 833.8 L1036.8 822" stroke="#dcdcdc" stroke-width="3.2" fill="none" stroke-linecap="square"/>
</svg>


<!-- ============ TASKBAR ============ -->
<div class="a" style="left:0;top:1040px;width:1920px;height:40px;background:#302b26;z-index:10">
  <div class="a" style="left:48px;top:0;width:288px;height:40px;background:#333333;border-top:1px solid #5a5a5a;border-left:1px solid #5a5a5a;border-right:1px solid #4a4a4a"></div>
  <div class="a" style="left:1361px;top:0;width:126px;height:40px;background:#4a4540"></div>
  <div class="a" style="left:1913px;top:0;width:1px;height:40px;background:#6a6560"></div>
</div>
<div class="t" style="left:88px;top:1053px;font-size:15px;color:#d8d8d8;letter-spacing:-0.25px;z-index:11">Type here to search</div>
<div class="t" style="left:536px;top:1054px;font-size:12px;color:#f0f0f0;letter-spacing:-0.7px;z-index:11">Release</div>
<div class="t" style="left:891px;top:1054px;font-size:12px;color:#f0f0f0;letter-spacing:-0.27px;z-index:11">SampleMake...</div>
<div class="t" style="left:1018px;top:1054px;font-size:12px;color:#f0f0f0;letter-spacing:0px;z-index:11">lockup.txt - ...</div>
<div class="t" style="left:1145px;top:1054px;font-size:12px;color:#f0f0f0;letter-spacing:-0.3px;z-index:11">SampleMake...</div>
<div class="t" style="left:1272px;top:1054px;font-size:12px;color:#f0f0f0;letter-spacing:-0.24px;z-index:11">Sample Make...</div>
<div class="t" style="left:1398px;top:1054px;font-size:12px;color:#f0f0f0;letter-spacing:-0.15px;z-index:11">Fold-it 3D Vie...</div>
<div class="t" style="left:1525px;top:1054px;font-size:12px;color:#f0f0f0;letter-spacing:0px;z-index:11">Untitled* - Pa...</div>
<div class="t" style="left:1643px;top:1054px;font-size:12px;color:#d0d0d0;letter-spacing:-0.18px;z-index:11">Desktop</div>
<div class="t" style="left:1814px;top:1045px;font-size:12px;color:#f0f0f0;letter-spacing:-0.35px;z-index:11">2:13 PM</div>
<div class="t" style="left:1806px;top:1063px;font-size:12px;color:#f0f0f0;letter-spacing:-0.23px;z-index:11">12/30/2025</div>
<svg width="1920" height="1080" id="taskicons" style="z-index:12"><rect x="503" y="1078" width="119" height="2" fill="#99d0f5"/>
<rect x="858" y="1078" width="118" height="2" fill="#99d0f5"/>
<rect x="985" y="1078" width="118" height="2" fill="#99d0f5"/>
<rect x="1112" y="1078" width="118" height="2" fill="#99d0f5"/>
<rect x="1239" y="1078" width="118" height="2" fill="#99d0f5"/>
<rect x="1361" y="1078" width="126" height="2" fill="#99d0f5"/>
<rect x="1492" y="1078" width="118" height="2" fill="#99d0f5"/>
<path d="M15.6 1053.5 L22.7 1052.5 L22.7 1059.4 L15.6 1059.4 Z M23.6 1052.4 L32.2 1051.6 L32.2 1059.4 L23.6 1059.4 Z M15.6 1060.3 L22.7 1060.3 L22.7 1067.3 L15.6 1066.4 Z M23.6 1060.3 L32.2 1060.3 L32.2 1068.2 L23.6 1067.4 Z" fill="#fff"/>
<circle cx="70" cy="1057.3" r="5.3" stroke="#e0e0e0" stroke-width="1.3" fill="none"/><line x1="66.2" y1="1061.2" x2="60.5" y2="1067.5" stroke="#e0e0e0" stroke-width="1.4"/>
<rect x="267" y="1052" width="25" height="9" rx="1" fill="#e8c878"/><rect x="265" y="1062" width="28.5" height="13" rx="1" fill="#e8c070"/><rect x="266" y="1061" width="27" height="3" fill="#d8b060"/><rect x="275" y="1056" width="8" height="1.5" fill="#8a7040"/><rect x="275" y="1068" width="8" height="1.5" fill="#8a7040"/>
<path d="M300 1074 L300 1062 Q300 1056 304 1053 L304 1050 L299 1047 L309 1046 L311 1050 L308 1050 L308 1053 Q312 1056 312 1062 L312 1074 Z" fill="#8ed0a8"/><path d="M306 1070 L326 1064 L327 1069 L308 1075 Z" fill="#3aa040"/><path d="M307 1073 L325 1068 L326 1072 L308 1076 Z" fill="#e8c030"/>
<path d="M352 1054.6 L352 1052.6 L363 1052.6 L363 1054.6 M352 1065 L352 1067 L363 1067 L363 1065" stroke="#fff" stroke-width="1.3" fill="none"/><rect x="353.6" y="1056.4" width="7.8" height="7" stroke="#fff" stroke-width="1.3" fill="none"/><rect x="366" y="1052" width="1.5" height="2.5" fill="#fff"/><rect x="365" y="1056.2" width="3" height="3.2" fill="#fff"/><rect x="366" y="1060.6" width="1.5" height="6.4" fill="#fff"/>
<rect x="390.5" y="1052" width="1" height="16" fill="#7a7570"/><rect x="393.5" y="1052" width="1" height="16" fill="#7a7570"/>
<defs><linearGradient id="eg" x1="0" y1="0" x2="1" y2="1"><stop offset="0" stop-color="#40c8f0"/><stop offset="0.6" stop-color="#2a90e0"/><stop offset="1" stop-color="#50d070"/></linearGradient><linearGradient id="cg" x1="0" y1="0" x2="1" y2="1"><stop offset="0" stop-color="#30a0f0"/><stop offset="0.4" stop-color="#f0d040"/><stop offset="0.7" stop-color="#f05040"/><stop offset="1" stop-color="#c060f0"/></linearGradient><linearGradient id="pg" x1="0" y1="0" x2="0" y2="1"><stop offset="0" stop-color="#f8c020"/><stop offset="0.4" stop-color="#e84890"/><stop offset="0.7" stop-color="#8050e0"/><stop offset="1" stop-color="#20a0f0"/></linearGradient></defs>
<circle cx="429" cy="1059.7" r="12.2" fill="url(#eg)"/><path d="M420 1062 Q421 1055 429 1055 Q436 1055 437 1061 L428 1061 Q425 1066 431 1068 Q425 1071 419 1066 Z" fill="#1a60b0"/><ellipse cx="430" cy="1061" rx="4.5" ry="3" fill="#302b26"/>
<path d="M466 1066 Q463 1058 468 1052 L476 1050 Q482 1050 484 1055 Q488 1064 483 1069 L474 1070 Q468 1070 466 1066 Z" fill="url(#cg)"/><path d="M473 1056 L478 1056 L476 1066 L471 1066 Z" fill="#302b26" opacity="0.6"/>
<path d="M511.7 1051 L518 1051 L518 1053 L525.2 1053 L525.2 1070 L516 1070 L516 1071 L511.7 1070 Z" fill="#f0c860"/><path d="M511.7 1051 L515 1053 L515 1071 L511.7 1070 Z" fill="#f8dc90"/>
<path d="M637 1054 L660 1054 L660 1069 Q660 1072 657 1072 L640 1072 Q637 1072 637 1069 Z" fill="#f4f4f4"/><path d="M642 1054 Q642 1049 648.5 1049 Q655 1049 655 1054" stroke="#30b0f0" stroke-width="1.5" fill="none"/><rect x="643" y="1058" width="5" height="5" fill="#f05020"/><rect x="649" y="1058" width="5" height="5" fill="#80c020"/><rect x="643" y="1064" width="5" height="5" fill="#20a0f0"/><rect x="649" y="1064" width="5" height="5" fill="#f8c010"/>
<path d="M684 1058 L697 1049 L706 1055 L706 1070 L688 1072 Z" fill="#1a80e0"/><path d="M690 1052 L700 1049 L706 1055 L696 1058 Z" fill="#60c0f8"/><rect x="682.5" y="1059" width="10" height="10" rx="1.5" fill="#0a50b0"/><circle cx="687.5" cy="1064" r="2.7" stroke="#fff" stroke-width="1.3" fill="none"/>
<rect x="730.5" y="1054" width="21" height="15" fill="#30a8e8"/><rect x="732" y="1056" width="18" height="11" fill="#9ad8f8"/><circle cx="737" cy="1061" r="3.3" fill="#2070c0"/><rect x="742" y="1057" width="7" height="1.5" fill="#2070c0"/><rect x="742" y="1060" width="7" height="1.5" fill="#2070c0"/><rect x="742" y="1063" width="7" height="1.5" fill="#2070c0"/>
<rect x="773.7" y="1047.7" width="24.3" height="24" fill="#7a9060"/><rect x="773.7" y="1047.7" width="24.3" height="8" fill="#60a0d0"/><path d="M776 1052 L792 1068 L794 1066 L779 1051 Z" fill="#111"/><path d="M788 1052 L792 1050 L796 1052 L793 1057 L795 1068 L791 1069 L790 1058 Z" fill="#f09020"/>
<rect x="823" y="1052" width="18" height="12" fill="#505050"/><g stroke="#909090" stroke-width="0.8"><line x1="825" y1="1055" x2="839" y2="1055"/><line x1="825" y1="1058" x2="839" y2="1058"/><line x1="825" y1="1061" x2="839" y2="1061"/></g><circle cx="829" cy="1063" r="4.5" fill="#b0c0c8" stroke="#e0e0e0" stroke-width="1"/><line x1="826" y1="1067" x2="819" y2="1072" stroke="#909090" stroke-width="1.6"/>
<path d="M862.5 1055 L867 1050 L874 1059 L884 1049 L886 1050 L886 1070 L884 1071 L874 1062 L867 1070 L862.5 1066 Z" fill="#a040e0"/><path d="M868 1056 L868 1064 L872 1060 Z" fill="#302b26"/><path d="M878 1060 L884 1054 L884 1066 Z" fill="#302b26"/><rect x="876" y="1065" width="10" height="7" fill="#f8c010"/><text x="877" y="1071" font-family="Liberation Sans" font-size="5.5" font-weight="bold" fill="#000">IN</text>
<path d="M992 1053 L1009 1049 L1012.5 1068 L995 1072 Z" fill="#80c8e8"/><path d="M993 1054 L1008 1050.5 L1011 1067 L996 1070.5 Z" fill="#c8e8f8"/><rect x="1009" y="1063" width="4" height="9" fill="#d0a040"/>
<circle cx="1129.5" cy="1059.7" r="12.5" fill="#e84030"/><path d="M1129.5 1059.7 L1140.3 1053.5 A12.5 12.5 0 0 1 1135.8 1070.5 Z" fill="#f8c020"/><path d="M1129.5 1059.7 L1135.8 1070.5 A12.5 12.5 0 0 1 1118.7 1053.5 Z" fill="#30a050"/><circle cx="1129.5" cy="1059.7" r="5.5" fill="#fff"/><circle cx="1129.5" cy="1059.7" r="4.3" fill="#3080f0"/><circle cx="1136" cy="1066" r="6.5" fill="#506080"/><path d="M1131 1066 L1141 1064" stroke="#c05030" stroke-width="2"/>
<g transform="translate(1244.5 1048.8) scale(1)"><rect x="0" y="0" width="22.5" height="22.5" rx="3" fill="#fbfbfb"/><path d="M5.5 7 L8.2 0 L19 0 Q22.5 0 22.5 3 L22.5 3.5 L20 7 Z" fill="#33353a"/><text x="9.3" y="6.2" font-family="Liberation Sans" font-size="6.6" font-weight="bold" font-style="italic" fill="#fff">SM</text><path d="M6.3 7.4 L17 7.4 L11.2 17 Z" fill="#c2c5cb"/><path d="M17 7.4 L20 7.4 L13 18 L11.2 17 Z" fill="#eceef0"/><rect x="1" y="17.6" width="10" height="1" fill="#dadada"/></g>
<g transform="translate(1370.5 1048.8) scale(1)"><rect x="0" y="0" width="22.5" height="22.5" rx="3" fill="#fbfbfb"/><path d="M5.5 7 L8.2 0 L19 0 Q22.5 0 22.5 3 L22.5 3.5 L20 7 Z" fill="#33353a"/><text x="9.3" y="6.2" font-family="Liberation Sans" font-size="6.6" font-weight="bold" font-style="italic" fill="#fff">SM</text><path d="M6.3 7.4 L17 7.4 L11.2 17 Z" fill="#c2c5cb"/><path d="M17 7.4 L20 7.4 L13 18 L11.2 17 Z" fill="#eceef0"/><rect x="1" y="17.6" width="10" height="1" fill="#dadada"/></g>
<path d="M1509 1049 Q1499.5 1060 1499.5 1064 Q1499.5 1072 1509 1072 Q1518.7 1072 1518.7 1064 Q1518.7 1060 1509 1049 Z" fill="url(#pg)"/>
<rect x="1630" y="1052" width="1" height="16" fill="#6a6560"/><rect x="1632.5" y="1052" width="1" height="16" fill="#6a6560"/>
<path d="M1694 1048 L1697 1050 L1694 1052 M1699 1048 L1702 1050 L1699 1052" stroke="#e0e0e0" stroke-width="1.2" fill="none"/>
<path d="M1712.5 1063.7 L1719 1057 L1725.5 1063.7" stroke="#e8e8e8" stroke-width="1.4" fill="none"/>
<rect x="1738" y="1054" width="8" height="10" rx="2" stroke="#e8e8e8" stroke-width="1.2" fill="none"/><path d="M1746 1057 L1750 1055 L1750 1063 L1746 1061" stroke="#e8e8e8" stroke-width="1.2" fill="none"/><path d="M1739 1052 Q1742 1050 1745 1052 M1739 1066 Q1742 1068 1745 1066" stroke="#e8e8e8" stroke-width="1" fill="none"/>
<rect x="1763" y="1054" width="12" height="9" stroke="#e8e8e8" stroke-width="1.2" fill="none"/><rect x="1759" y="1051.5" width="6" height="5" stroke="#e8e8e8" stroke-width="1.1" fill="#302b26"/><path d="M1769 1063 L1769 1067 M1765 1067.5 L1773 1067.5" stroke="#e8e8e8" stroke-width="1.2"/>
<path d="M1783 1057 L1786 1057 L1790 1053 L1790 1067 L1786 1063 L1783 1063 Z" stroke="#e8e8e8" stroke-width="1.2" fill="none"/><path d="M1792.5 1057 Q1794.5 1060 1792.5 1063 M1795 1055 Q1798 1060 1795 1065 M1797.5 1053 Q1801.5 1060 1797.5 1067" stroke="#e8e8e8" stroke-width="1.2" fill="none"/>
<path d="M1879 1052 L1898 1052 L1898 1066 L1887 1066 L1883 1070 L1883 1066 L1879 1066 Z" fill="#f0f0f0"/><g stroke="#302b26" stroke-width="1"><line x1="1882" y1="1056" x2="1895" y2="1056"/><line x1="1882" y1="1059" x2="1895" y2="1059"/><line x1="1882" y1="1062" x2="1891" y2="1062"/></g><circle cx="1894.5" cy="1068" r="7" fill="#302b26" stroke="#b8b8b8" stroke-width="1"/><text x="1891.5" y="1072.5" font-family="Liberation Sans" font-size="11" fill="#f0f0f0">1</text></svg>

</body></html>
